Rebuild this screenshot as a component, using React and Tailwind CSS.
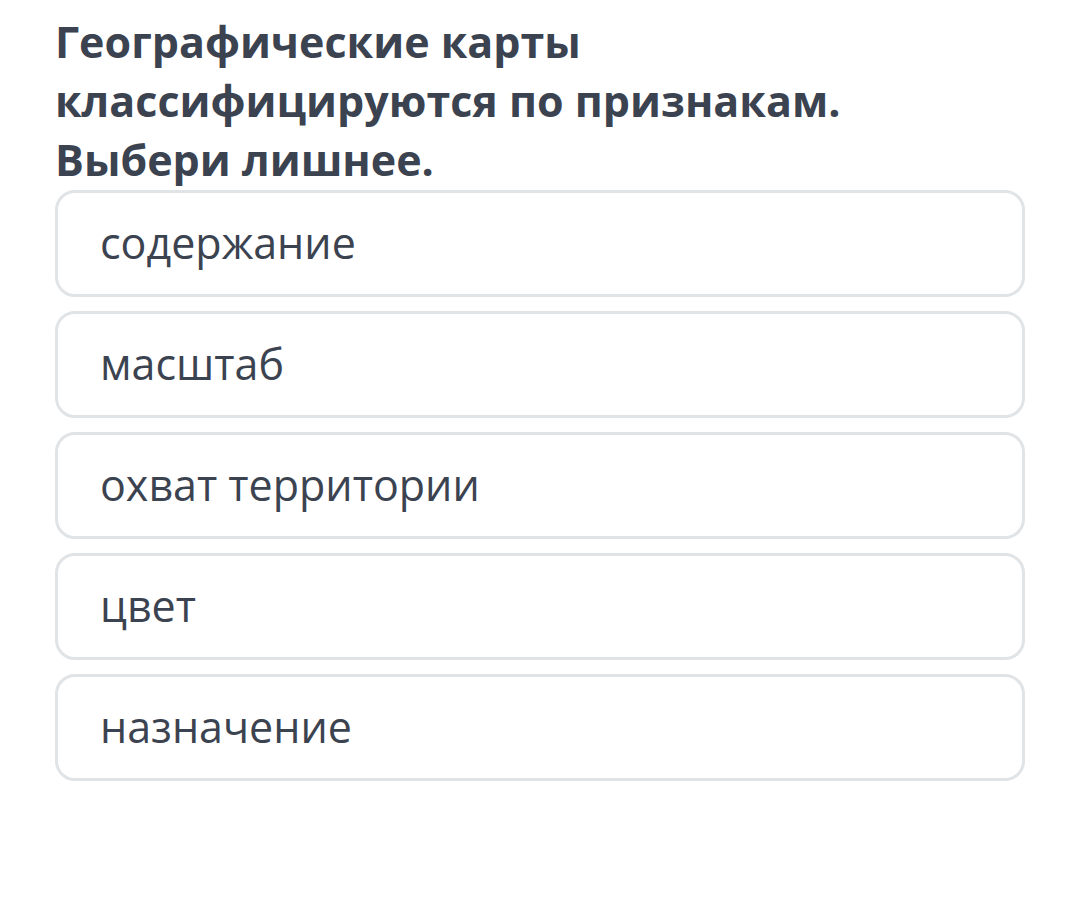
export default function App() {
  const options = ["содержание", "масштаб", "охват территории", "цвет", "назначение"];
  return (
    <div className="w-[1080px] h-[902px] bg-white" style={{ fontFamily: '"Open Sans", sans-serif' }}>
      <div className="pl-[55px] pr-[55px] pt-[12px]">
        <h1 className="text-[43px] leading-[59px] font-bold text-[#3c4350] w-[900px]">
          Географические карты<br />классифицируются по признакам.<br />Выбери лишнее.
        </h1>
        <div className="flex flex-col gap-[14px] mt-[1px]">
          {options.map((o) => (
            <div
              key={o}
              className="h-[107px] border-[3px] border-[#e0e4e7] rounded-[20px] flex items-center pl-[42px] text-[43px] text-[#3c4350]"
            >
              {o}
            </div>
          ))}
        </div>
      </div>
    </div>
  );
}
